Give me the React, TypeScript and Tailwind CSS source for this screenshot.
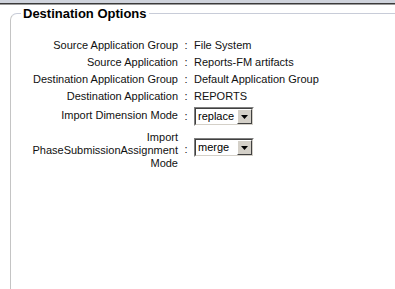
import React from "react";

const rows: { label: React.ReactNode; value: string }[] = [
  { label: "Source Application Group", value: "File System" },
  { label: "Source Application", value: "Reports-FM artifacts" },
  { label: "Destination Application Group", value: "Default Application Group" },
  { label: "Destination Application", value: "REPORTS" },
];

function Combo({ value }: { value: string }) {
  return (
    <div className="flex h-[19px] w-[60px] border border-t-[#808080] border-l-[#808080] border-r-[#ffffff] border-b-[#ffffff]">
      <div className="flex flex-1 border border-t-[#404040] border-l-[#404040] border-r-[#d4d0c8] border-b-[#d4d0c8] bg-white">
        <span className="flex-1 pl-[2px] leading-[15px] text-black">{value}</span>
        <div className="flex w-[15px] items-center justify-center border border-t-[#ffffff] border-l-[#ffffff] border-r-[#404040] border-b-[#404040] bg-[#d4d0c8]">
          <svg width="7" height="4" viewBox="0 0 7 4">
            <path d="M0 0h7L3.5 4z" fill="#000" />
          </svg>
        </div>
      </div>
    </div>
  );
}

export default function App() {
  return (
    <div className="h-[289px] w-[395px] overflow-hidden bg-white font-['Liberation_Sans',Arial,sans-serif] text-[11px] text-[#111]">
      <div className="h-[3px] bg-[#cfd3dc]" />
      <div className="h-px bg-[#3a3a3a]" />
      <div className="h-px bg-[#9a9a9a]" />
      <fieldset className="ml-[10px] mt-[1px] h-[300px] w-[420px] rounded-tl-[7px] border-l border-t border-l-[#c4c4c4] border-t-[#c8ccd8] pt-[16px]">
        <legend className="ml-[10px] px-[2px] text-[13px] leading-[15px] font-bold text-black">Destination Options</legend>
        <div className="grid grid-cols-[167px_16px_auto] items-start">
          {rows.map((r, i) => (
            <React.Fragment key={i}>
              <div className="h-[17px] text-right leading-[17px]">{r.label}</div>
              <div className="text-center leading-[17px]">:</div>
              <div className="leading-[17px]">{r.value}</div>
            </React.Fragment>
          ))}
          <div className="mt-[4px] text-right leading-[13px]">Import Dimension Mode</div>
          <div className="mt-[5px] text-center leading-[13px]">:</div>
          <div className="mt-[2px]">
            <Combo value="replace" />
          </div>
          <div className="mt-[5px] text-right leading-[13px]">
            Import
            <br />
            PhaseSubmissionAssignment
            <br />
            Mode
          </div>
          <div className="mt-[17px] text-center leading-[13px]">:</div>
          <div className="mt-[12px]">
            <Combo value="merge" />
          </div>
        </div>
      </fieldset>
    </div>
  );
}
